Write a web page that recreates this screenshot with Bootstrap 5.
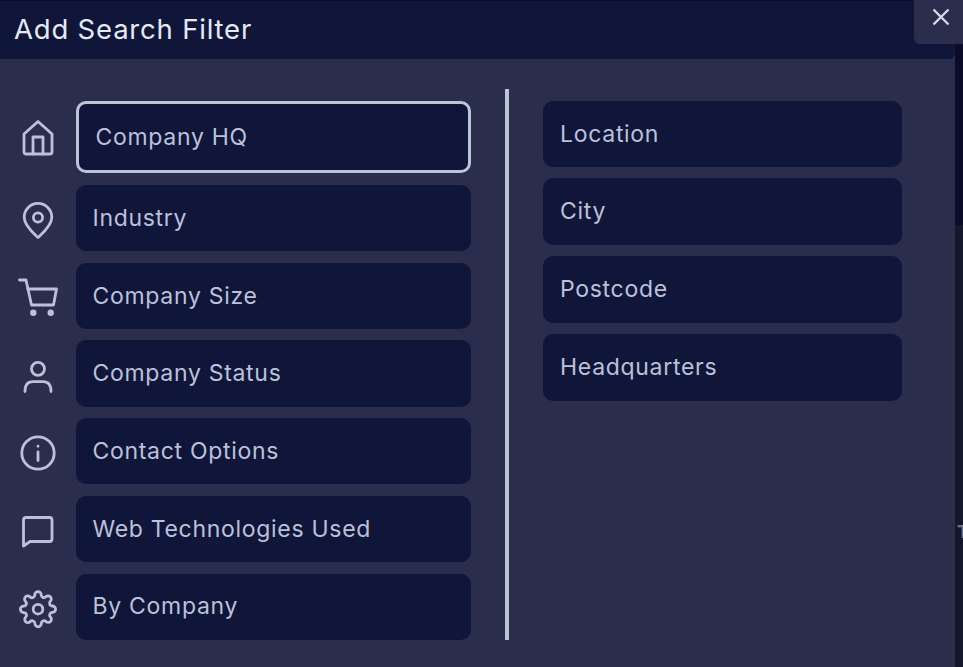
<!DOCTYPE html>
<html lang="en">
<head>
<meta charset="utf-8">
<title>Add Search Filter</title>
<link rel="stylesheet" href="https://cdn.jsdelivr.net/npm/bootstrap@5.3.0/dist/css/bootstrap.min.css">
<style>
html,body{height:667px;overflow:hidden}
body{background:#15172c;font-family:Inter,"Liberation Sans",sans-serif;color:#bcc1d9}
.sf-panel{width:955px;height:667px;background:#2a2d4b;position:relative;flex:none}
.sf-head{height:59px;background:#10163a;border-top:1px solid #0a0d28;border-bottom-right-radius:6px;padding-left:14px}
.sf-title{font-size:27.5px;font-weight:400;color:#e6e9f6;margin:0 0 1px;letter-spacing:.8px;line-height:1}
.sf-close{position:absolute;top:0;left:914px;width:49px;height:44px;background:#2a2d4b;border:0;border-bottom-left-radius:6px;color:#d5d8e8;padding:0 0 10px 4px;z-index:2}
.sf-body{padding-top:30px}
.sf-left{width:509px;border-right:4px solid #bcc5d5;padding-top:11.8px;height:551px;gap:11.4px}
.sf-right{margin-left:34px;width:359px;padding-top:11.6px;gap:11.2px}
.sf-row{height:66.35px}
.sf-row-first{height:72.7px}
.sf-icon{width:44px;height:44px;margin-left:16px;margin-right:16px;flex:none;fill:none;stroke:#bcc1d9;stroke-width:2.8;stroke-linecap:round;stroke-linejoin:round}
.sf-item{background:#10163a;border-radius:10px;font-size:23px;letter-spacing:.7px;padding-left:16.5px;color:#bcc1d9;height:100%;width:395px}
.sf-item-on{border:3px solid #bcc5d5;padding-left:16.5px}
.sf-right .sf-item{width:359px;height:66.6px;padding-left:17px}
.sf-strip{flex:1;height:667px;position:relative;overflow:hidden}
.sf-strip-top{height:225px;background:#0a0c28}
.sf-t{position:absolute;left:2px;top:523px;font-size:18px;font-weight:700;color:#71748a;line-height:1}
</style>
</head>
<body class="d-flex">
<div class="sf-panel">
  <div class="sf-head d-flex align-items-center"><h1 class="sf-title">Add Search Filter</h1></div>
  <div class="sf-body d-flex align-items-start">
    <div class="sf-left d-flex flex-column">
      <div class="sf-row sf-row-first d-flex align-items-center">
        <svg class="sf-icon" viewBox="0 0 44 44"><path d="M8 19 22 6.5 36 19V37a2 2 0 0 1-2 2H10a2 2 0 0 1-2-2Z"/><path d="M17 39V22H27V39"/></svg>
        <div class="sf-item sf-item-on d-flex align-items-center">Company HQ</div>
      </div>
      <div class="sf-row d-flex align-items-center">
        <svg class="sf-icon" viewBox="0 0 44 44"><path d="M22 41.5 C20 39.5 8.2 30 8.2 21.2a13.8 13.8 0 0 1 27.6 0C35.8 30 24 39.5 22 41.5Z"/><circle cx="22" cy="21.5" r="4.6"/></svg>
        <div class="sf-item d-flex align-items-center">Industry</div>
      </div>
      <div class="sf-row d-flex align-items-center">
        <svg class="sf-icon" viewBox="0 0 44 44"><path d="M3.5 6H10L15.5 31H37.5L40.5 15H11.5"/><circle cx="17.3" cy="38.7" r="1.8" fill="#bcc1d9"/><circle cx="34.7" cy="38.7" r="1.8" fill="#bcc1d9"/></svg>
        <div class="sf-item d-flex align-items-center">Company Size</div>
      </div>
      <div class="sf-row d-flex align-items-center">
        <svg class="sf-icon" viewBox="0 0 44 44"><circle cx="22" cy="16.8" r="6.5"/><path d="M9 39.5C9 33 12 29.7 17 29.7H27C32 29.7 35 33 35 39.5"/></svg>
        <div class="sf-item d-flex align-items-center">Company Status</div>
      </div>
      <div class="sf-row d-flex align-items-center">
        <svg class="sf-icon" viewBox="0 0 44 44"><circle cx="22" cy="24" r="16.2"/><path d="M22 23V31.5M22 17.2V17.3"/></svg>
        <div class="sf-item d-flex align-items-center">Contact Options</div>
      </div>
      <div class="sf-row d-flex align-items-center">
        <svg class="sf-icon" viewBox="0 0 44 44"><path d="M7.5 39V13A2.5 2.5 0 0 1 10 10.5H33.5A2.5 2.5 0 0 1 36 13V32A2.5 2.5 0 0 1 33.5 34.5H14Z"/></svg>
        <div class="sf-item d-flex align-items-center">Web Technologies Used</div>
      </div>
      <div class="sf-row d-flex align-items-center">
        <svg class="sf-icon" viewBox="0 0 44 44"><g transform="translate(22 24.2) scale(1.6) translate(-12 -12)" stroke-width="1.75"><circle cx="12" cy="12" r="3"/><path d="M19.4 15a1.65 1.65 0 0 0 .33 1.82l.06.06a2 2 0 0 1 0 2.83 2 2 0 0 1-2.83 0l-.06-.06a1.65 1.65 0 0 0-1.82-.33 1.65 1.65 0 0 0-1 1.51V21a2 2 0 0 1-2 2 2 2 0 0 1-2-2v-.09A1.65 1.65 0 0 0 9 19.4a1.65 1.65 0 0 0-1.82.33l-.06.06a2 2 0 0 1-2.83 0 2 2 0 0 1 0-2.83l.06-.06a1.65 1.65 0 0 0 .33-1.82 1.65 1.65 0 0 0-1.51-1H3a2 2 0 0 1-2-2 2 2 0 0 1 2-2h.09A1.65 1.65 0 0 0 4.6 9a1.65 1.65 0 0 0-.33-1.82l-.06-.06a2 2 0 0 1 0-2.83 2 2 0 0 1 2.83 0l.06.06a1.65 1.65 0 0 0 1.82.33H9a1.65 1.65 0 0 0 1-1.51V3a2 2 0 0 1 2-2 2 2 0 0 1 2 2v.09a1.65 1.65 0 0 0 1 1.51 1.65 1.65 0 0 0 1.82-.33l.06-.06a2 2 0 0 1 2.83 0 2 2 0 0 1 0 2.83l-.06.06a1.65 1.65 0 0 0-.33 1.82V9a1.65 1.65 0 0 0 1.51 1H21a2 2 0 0 1 2 2 2 2 0 0 1-2 2h-.09a1.65 1.65 0 0 0-1.51 1z"/></g></svg>
        <div class="sf-item d-flex align-items-center">By Company</div>
      </div>
    </div>
    <div class="sf-right d-flex flex-column">
      <div class="sf-item d-flex align-items-center">Location</div>
      <div class="sf-item d-flex align-items-center">City</div>
      <div class="sf-item d-flex align-items-center">Postcode</div>
      <div class="sf-item d-flex align-items-center">Headquarters</div>
    </div>
  </div>
</div>
<div class="sf-strip"><div class="sf-strip-top"></div><span class="sf-t">T</span></div>
<button type="button" class="sf-close d-flex align-items-center justify-content-center" aria-label="Close"><svg width="18" height="18" viewBox="0 0 18 18" fill="none" stroke="#d5d8e8" stroke-width="2.4"><path d="M1.5 1.5 16.5 16.5M16.5 1.5 1.5 16.5"/></svg></button>
<script src="https://cdn.jsdelivr.net/npm/bootstrap@5.3.0/dist/js/bootstrap.bundle.min.js"></script>
</body>
</html>
